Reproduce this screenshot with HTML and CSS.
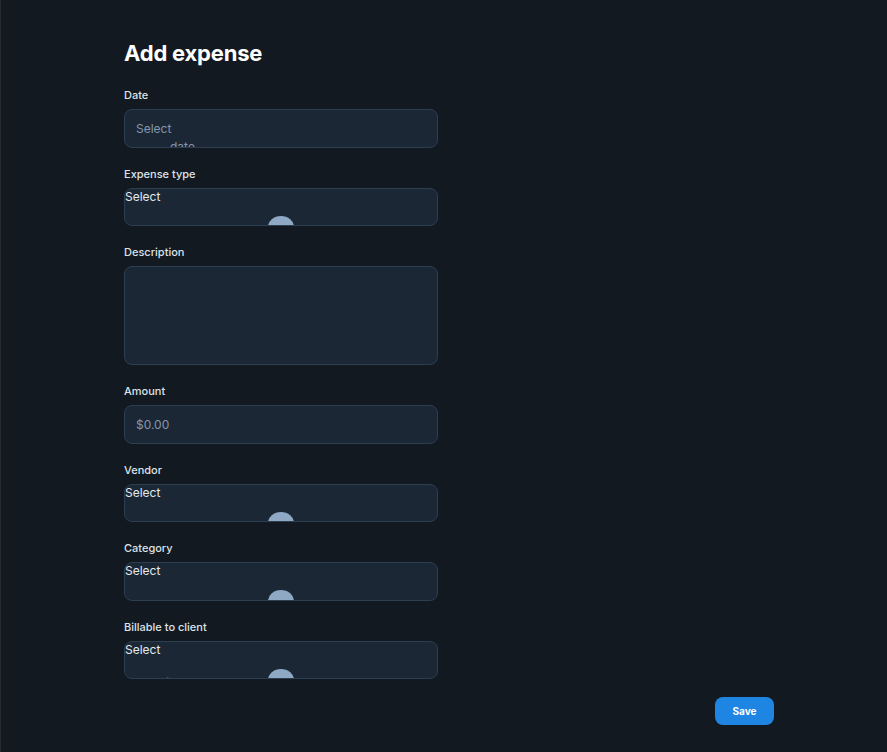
FILE: index.html
```html
<!DOCTYPE html>
<html lang="en">
<head>
<meta charset="utf-8">
<title>Add expense</title>
<link rel="stylesheet" href="styles.css">
</head>
<body>
<main class="page">
  <form class="form">
    <h1 class="title">Add expense</h1>

    <div class="field">
      <label class="label">Date</label>
      <div class="input date-input">
        <span class="ph-line">Select</span>
        <span class="ph-line ph-indent">date</span>
      </div>
    </div>

    <div class="field">
      <label class="label">Expense type</label>
      <div class="select">
        <span class="select-text">Select</span>
        <div class="select-row"><span class="hump"></span></div>
      </div>
    </div>

    <div class="field">
      <label class="label">Description</label>
      <div class="input textarea"></div>
    </div>

    <div class="field">
      <label class="label">Amount</label>
      <div class="input amount-input"><span class="ph-line">$0.00</span></div>
    </div>

    <div class="field">
      <label class="label">Vendor</label>
      <div class="select">
        <span class="select-text">Select</span>
        <div class="select-row"><span class="select-word">vendor</span><span class="hump"></span></div>
      </div>
    </div>

    <div class="field">
      <label class="label">Category</label>
      <div class="select">
        <span class="select-text">Select</span>
        <div class="select-row"><span class="hump"></span></div>
      </div>
    </div>

    <div class="field">
      <label class="label">Billable to client</label>
      <div class="select">
        <span class="select-text">Select</span>
        <div class="select-row"><span class="select-word">billable</span><span class="hump"></span></div>
      </div>
    </div>
  </form>
  <div class="actions">
    <button class="save" type="button">Save</button>
  </div>
</main>
</body>
</html>
```

FILE: styles.css
```css
html, body {
  margin: 0;
  padding: 0;
  background: #131920;
  height: 100%;
}
body {
  font-family: Inter, "Noto Sans", "Liberation Sans", sans-serif;
  color: #e6e9ee;
  border-left: 1px solid #262b30;
  box-sizing: border-box;
}
.page {
  padding: 39px 0 0 123px;
  width: 650px;
}
.form {
  width: 314px;
  display: flex;
  flex-direction: column;
}
.title {
  margin: 0 0 21px 0;
  font-size: 22px;
  line-height: 28px;
  font-weight: 700;
  color: #ffffff;
  letter-spacing: -0.2px;
}
.field {
  display: flex;
  flex-direction: column;
  gap: 7px;
  margin-bottom: 19px;
}
.field:last-child {
  margin-bottom: 0;
}
.label {
  font-size: 11px;
  line-height: 14px;
  font-weight: 500;
  color: #dde2e8;
}
.input, .select {
  box-sizing: border-box;
  height: 38.5px;
  background: #1b2735;
  border: 1px solid #2c3e52;
  border-radius: 8px;
  overflow: hidden;
}
.input {
  padding: 10px 11px 0;
  display: flex;
  flex-direction: column;
  font-size: 12px;
  line-height: 18px;
  color: #8596ab;
}
.ph-indent {
  margin-left: 34px;
}
.textarea {
  height: 99px;
}
.select {
  display: flex;
  flex-direction: column;
  font-size: 12px;
  line-height: 16px;
}
.select-text {
  color: #e6e9ee;
}
.select-row {
  position: relative;
  height: 40px;
}
.select-word {
  display: block;
  margin: 17px 0 0 34px;
  color: #9aa9bb;
}
.hump {
  position: absolute;
  left: calc(50% - 13px);
  top: 11px;
  width: 26px;
  height: 22px;
  border-radius: 50%;
  background: #8fa9c4;
}
.actions {
  display: flex;
  justify-content: flex-end;
  margin-top: 17.5px;
}
.save {
  width: 59px;
  height: 28px;
  border: none;
  border-radius: 8px;
  background: #1e86e2;
  color: #ffffff;
  font-family: Inter, "Noto Sans", "Liberation Sans", sans-serif;
  font-size: 10px;
  font-weight: 700;
  cursor: pointer;
}
```
